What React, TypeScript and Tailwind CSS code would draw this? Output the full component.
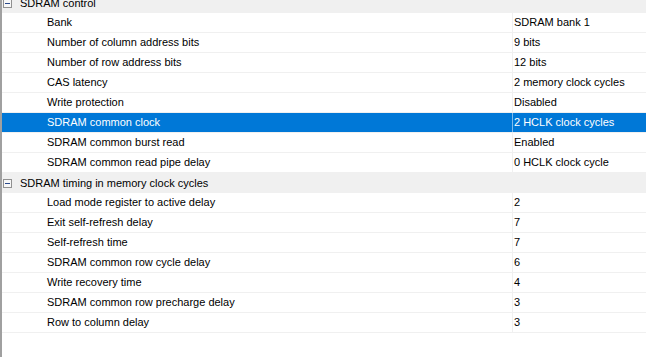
import type React from "react"

type Row = { label: string; value: string; selected?: boolean }

const groups: { title: string; rows: Row[] }[] = [
  {
    title: "SDRAM control",
    rows: [
      { label: "Bank", value: "SDRAM bank 1" },
      { label: "Number of column address bits", value: "9 bits" },
      { label: "Number of row address bits", value: "12 bits" },
      { label: "CAS latency", value: "2 memory clock cycles" },
      { label: "Write protection", value: "Disabled" },
      { label: "SDRAM common clock", value: "2 HCLK clock cycles", selected: true },
      { label: "SDRAM common burst read", value: "Enabled" },
      { label: "SDRAM common read pipe delay", value: "0 HCLK clock cycle" },
    ],
  },
  {
    title: "SDRAM timing in memory clock cycles",
    rows: [
      { label: "Load mode register to active delay", value: "2" },
      { label: "Exit self-refresh delay", value: "7" },
      { label: "Self-refresh time", value: "7" },
      { label: "SDRAM common row cycle delay", value: "6" },
      { label: "Write recovery time", value: "4" },
      { label: "SDRAM common row precharge delay", value: "3" },
      { label: "Row to column delay", value: "3" },
    ],
  },
]

const MinusBox: React.FC = () => (
  <span className="flex h-[9px] w-[9px] items-center justify-center border border-[#919191] bg-[#f7f7f7]">
    <span className="h-px w-[5px] bg-[#2b4a8c]" />
  </span>
)

const App: React.FC = () => {
  return (
    <div className="h-[357px] w-[646px] overflow-hidden bg-white text-[11px] text-black [font-family:'Liberation_Sans',Arial,sans-serif]">
      <div className="flex h-full border-l-2 border-[#a0a0a0]">
        <div className="-mt-[7px] flex w-full flex-col">
          {groups.map((g) => (
            <div key={g.title} className="flex flex-col">
              <div className="flex h-[20px] items-center bg-[#f0f0f0]">
                <div className="ml-[1px] mr-[8px]">
                  <MinusBox />
                </div>
                <span>{g.title}</span>
              </div>
              {g.rows.map((r) => (
                <div
                  key={r.label}
                  className={
                    r.selected
                      ? "flex h-[20px] border-b border-[#f0f0f0] bg-[#0078d7] text-white"
                      : "flex h-[20px] border-b border-[#f0f0f0]"
                  }
                >
                  <div className="flex w-[510px] items-center overflow-hidden whitespace-nowrap pl-[45px]">
                    {r.label}
                  </div>
                  <div
                    className={
                      r.selected
                        ? "flex flex-1 items-center border-l border-[#7fbbeb] pl-[1px]"
                        : "flex flex-1 items-center border-l border-[#f0f0f0] pl-[1px]"
                    }
                  >
                    {r.value}
                  </div>
                </div>
              ))}
            </div>
          ))}
        </div>
      </div>
    </div>
  )
}

export default App
